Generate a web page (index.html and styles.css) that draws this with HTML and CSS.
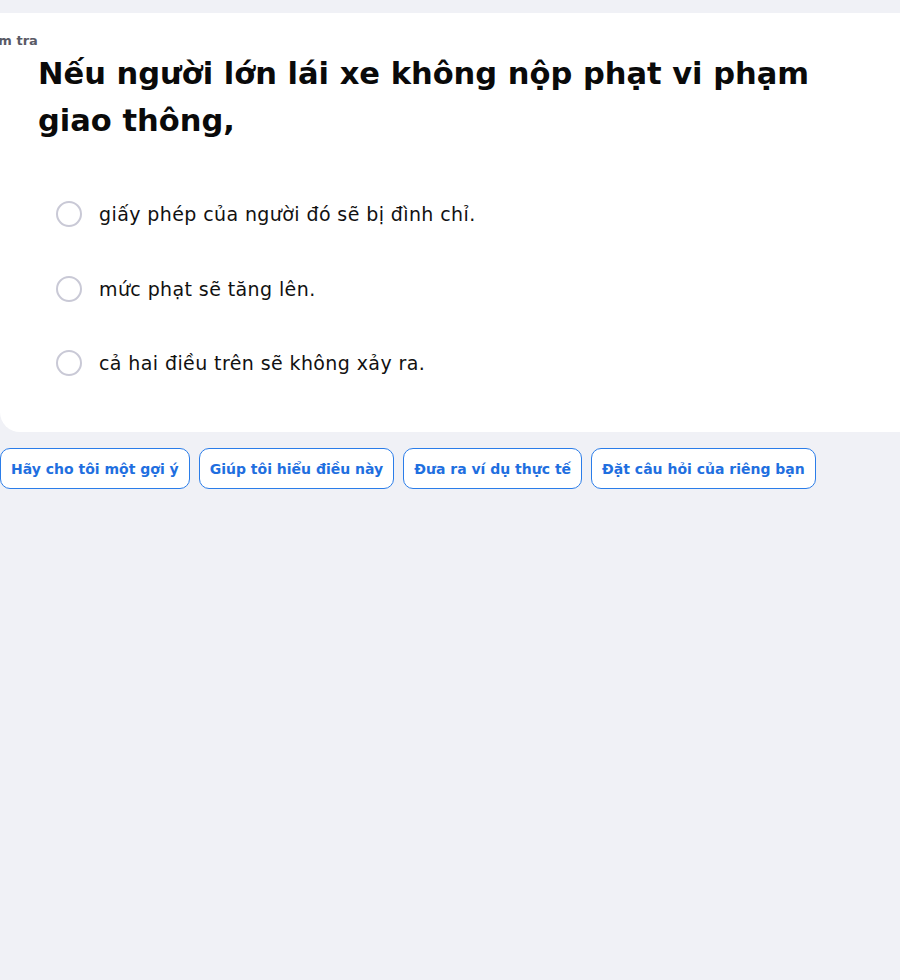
FILE: index.html
```html
<!DOCTYPE html>
<html lang="vi">
<head>
<meta charset="utf-8">
<link rel="stylesheet" href="styles.css">
</head>
<body>
<div class="page">
  <section class="card">
    <div class="label">Kiểm tra</div>
    <h1 class="title">Nếu người lớn lái xe không nộp phạt vi phạm giao thông,</h1>
    <ul class="options">
      <li class="option"><span class="radio"></span><span class="opt-text">giấy phép của người đó sẽ bị đình chỉ.</span></li>
      <li class="option"><span class="radio"></span><span class="opt-text">mức phạt sẽ tăng lên.</span></li>
      <li class="option"><span class="radio"></span><span class="opt-text">cả hai điều trên sẽ không xảy ra.</span></li>
    </ul>
  </section>
  <div class="chips">
    <button class="chip">Hãy cho tôi một gợi ý</button>
    <button class="chip">Giúp tôi hiểu điều này</button>
    <button class="chip">Đưa ra ví dụ thực tế</button>
    <button class="chip">Đặt câu hỏi của riêng bạn</button>
  </div>
</div>
</body>
</html>
```

FILE: styles.css
```css
html, body {
  margin: 0;
  padding: 0;
  background: #f0f1f6;
  overflow: hidden;
  font-family: "DejaVu Sans", "Noto Sans", sans-serif;
}
.page {
  padding-top: 13px;
  width: 900px;
  height: 967px;
}
.card {
  background: #ffffff;
  width: 920px;
  border-radius: 0 20px 20px 20px;
  padding: 19px 0 56px 0;
  box-sizing: border-box;
}
.label {
  margin-left: -25px;
  font-size: 13px;
  font-weight: 700;
  color: #5a5a66;
  line-height: 18px;
}
.title {
  margin: 0 0 0 38px;
  width: 800px;
  font-size: 30.5px;
  font-weight: 700;
  line-height: 47px;
  color: #0a0a0a;
}
.options {
  list-style: none;
  margin: 57px 0 0 0;
  padding: 0 0 0 56px;
  display: flex;
  flex-direction: column;
  gap: 48.5px;
}
.option {
  display: flex;
  align-items: center;
  height: 26px;
  gap: 17px;
}
.radio {
  width: 26px;
  height: 26px;
  box-sizing: border-box;
  border: 2px solid #c9c9d6;
  border-radius: 50%;
  flex: none;
}
.opt-text {
  font-size: 19px;
  letter-spacing: 0.4px;
  color: #111111;
}
.chips {
  display: flex;
  gap: 9px;
  margin-top: 16px;
}
.chip {
  height: 41px;
  padding: 0 10px;
  background: #ffffff;
  border: 1px solid #2b7de9;
  border-radius: 10px;
  color: #1f6fe0;
  font-family: "DejaVu Sans", "Noto Sans", sans-serif;
  font-size: 14px;
  font-weight: 700;
}
```
